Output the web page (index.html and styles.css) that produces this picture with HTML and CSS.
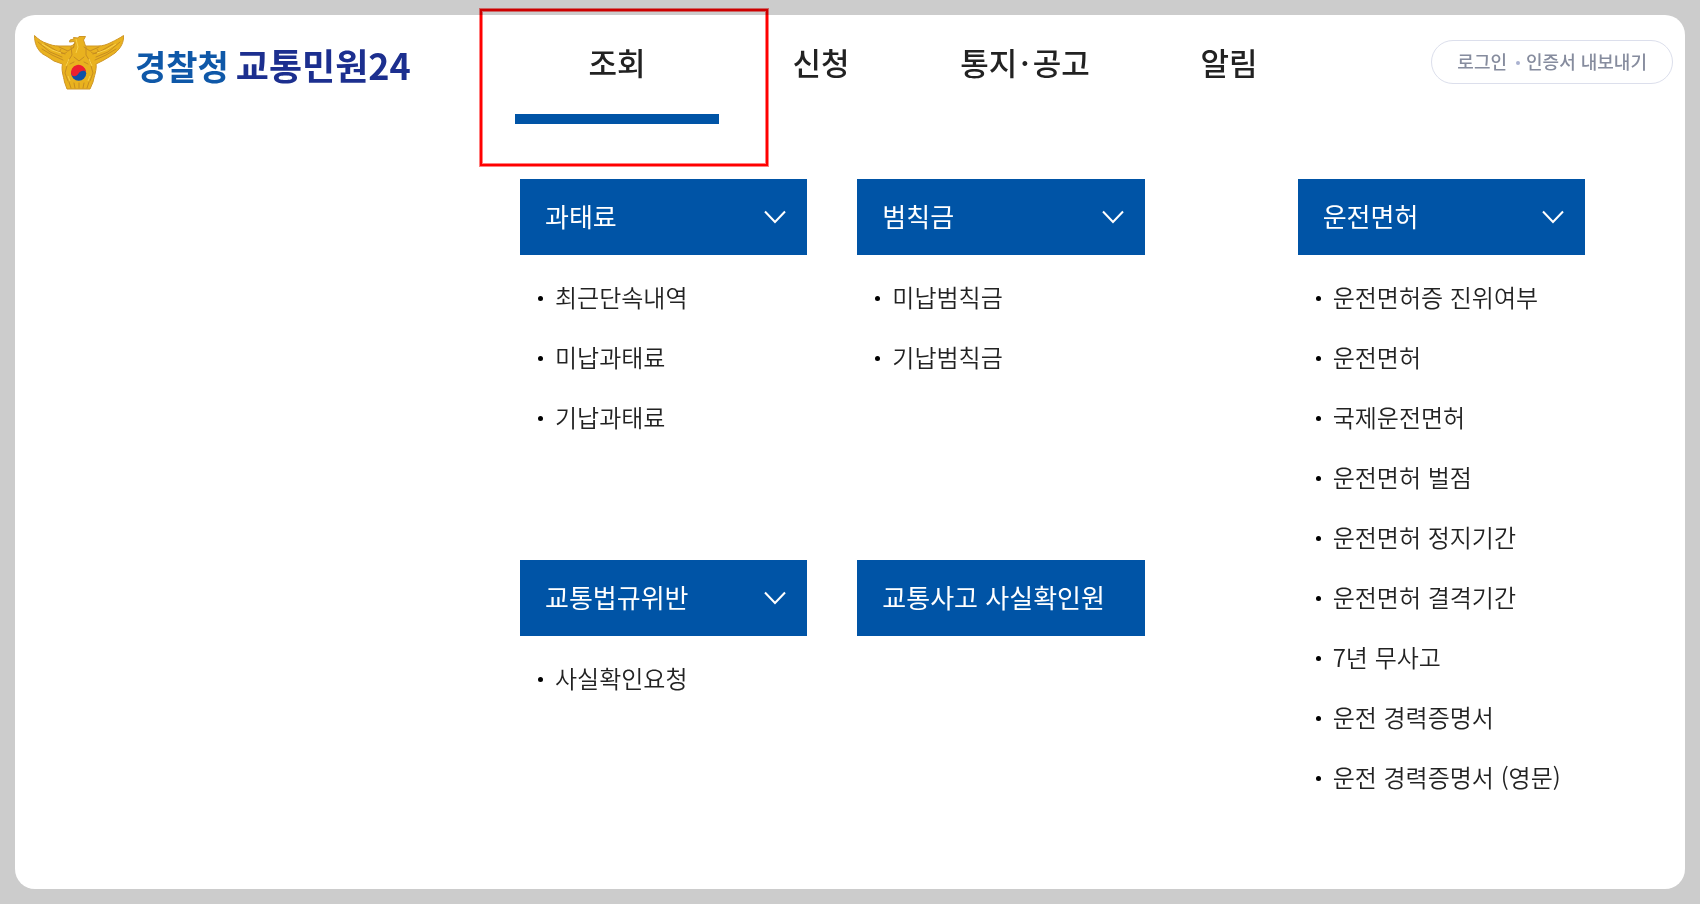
FILE: index.html
```html
<!DOCTYPE html>
<html lang="ko">
<head>
    <meta charset="UTF-8">
    <meta name="viewport" content="width=device-width, initial-scale=1.0">
    <title>경찰청 교통민원24</title>
    <link rel="stylesheet" href="styles.css">
</head>
<body>
    <div class="page">
        <header class="header">
            <a href="#" class="logo">
                <svg class="emblem" viewBox="0 0 90 55" aria-hidden="true">
                    <path fill="#e9b21f" stroke="#cf9626" stroke-width="1" stroke-linejoin="round" d="M.5 .5C4 4 8 7 13 8.500C17 10 20 11 25 11H37C40 10 41 8 40.500 6.500L35.500 7L36 5L40 4L39.500 2.500L44 3L45 1.500H51.500L49.500 5L51.500 11H64C69 11 73 9.500 77 7.500C82 5 86 3 89.500 .5C90 7 87 13 81 18L75 22L69 25.500L62 29C63 34 60 42 59 47L56 54H33L30.500 47C29.500 41 27 35 28.500 29L20 26L14 22L8 18.500C3 14 .5 8 .5 .5Z"/>
                    <g fill="none" stroke="#c68d22" stroke-width="1" stroke-linecap="round">
                        <path d="M4 7L16 17L28 22M8 14L18 20L29 25M11 9L23 16L31 19M86 7L74 17L62 22M82 14L72 20L61 25M79 9L67 16L59 19"/>
                        <path d="M25 12L34 16L40 12M65 12L56 16L50 12M27 14C23 18 31 20 33 17M63 14C67 18 59 20 57 17"/>
                        <path d="M37 12L38 20L33 28M52 12L52 20L57 28M40 22L45 26L50 22M41 8L39 13"/>
                        <path d="M33 31L31 38L34 46M57 31L59 38L56 46M35 47L37 53M40 48L41 53M45 48V53M50 48L49 53M55 47L53 53M36 29L40 27M54 29L50 27"/>
                    </g>
                    <path fill="none" stroke="#f8d14a" stroke-width="1" d="M8 9L18 15L27 18M82 9L72 15L63 18M42 4L44 12L42 18M35 24L32 31M55 24L58 31M36 46L34 41M54 46L56 41"/>
                    <circle cx="44.700" cy="38.300" r="7.500" fill="#0f52a8"/>
                    <path fill="#ee1f2f" d="M37.500 40A7.500 7.500 0 1 1 52 37C50 34.500 46 36 44.700 38.300C43 41.500 39.500 42 37.500 40Z"/>
                </svg>
                <span class="logo-text"><span class="logo-org">경찰청</span><span>교통민원24</span></span>
            </a>
            <nav class="gnb">
                <ul>
                    <li class="active"><a href="#">조회</a><span class="marker"></span></li>
                    <li><a href="#">신청</a></li>
                    <li><a href="#">통지<span class="dot">·</span>공고</a></li>
                    <li><a href="#">알림</a></li>
                </ul>
            </nav>
            <div class="util">
                <a href="#">로그인</a>
                <a href="#">인증서 내보내기</a>
            </div>
        </header>

        <main class="menu">
            <section class="group fine">
                <button type="button"><span>과태료</span>
                    <svg class="arrow" viewBox="0 0 22 14" aria-hidden="true"><path d="M1 1.500L11 12L21 1.500"/></svg>
                </button>
                <ul>
                    <li><a href="#">최근단속내역</a></li>
                    <li><a href="#">미납과태료</a></li>
                    <li><a href="#">기납과태료</a></li>
                </ul>
            </section>
            <section class="group penalty">
                <button type="button"><span>범칙금</span>
                    <svg class="arrow" viewBox="0 0 22 14" aria-hidden="true"><path d="M1 1.500L11 12L21 1.500"/></svg>
                </button>
                <ul>
                    <li><a href="#">미납범칙금</a></li>
                    <li><a href="#">기납범칙금</a></li>
                </ul>
            </section>
            <section class="group license">
                <button type="button"><span>운전면허</span>
                    <svg class="arrow" viewBox="0 0 22 14" aria-hidden="true"><path d="M1 1.500L11 12L21 1.500"/></svg>
                </button>
                <ul>
                    <li><a href="#">운전면허증 진위여부</a></li>
                    <li><a href="#">운전면허</a></li>
                    <li><a href="#">국제운전면허</a></li>
                    <li><a href="#">운전면허 벌점</a></li>
                    <li><a href="#">운전면허 정지기간</a></li>
                    <li><a href="#">운전면허 결격기간</a></li>
                    <li><a href="#">7년 무사고</a></li>
                    <li><a href="#">운전 경력증명서</a></li>
                    <li><a href="#">운전 경력증명서 (영문)</a></li>
                </ul>
            </section>
            <section class="group violation">
                <button type="button"><span>교통법규위반</span>
                    <svg class="arrow" viewBox="0 0 22 14" aria-hidden="true"><path d="M1 1.500L11 12L21 1.500"/></svg>
                </button>
                <ul>
                    <li><a href="#">사실확인요청</a></li>
                </ul>
            </section>
            <section class="group accident">
                <button type="button"><span>교통사고 사실확인원</span></button>
            </section>
        </main>
    </div>
</body>
</html>
```
FILE: styles.css
```css
* {
    box-sizing: border-box;
}
body {
    margin: 0;
    padding: 15px;
    min-height: 100vh;
    display: flex;
    background-color: #ccc;
    color: #222;
    font-family: "Noto Sans CJK KR", sans-serif;
}
ul {
    list-style: none;
    margin: 0;
    padding: 0;
}
a {
    color: inherit;
    text-decoration: none;
}
.page {
    flex: 1;
    background-color: #fff;
    border-radius: 20px;
}

/* header */
.header {
    display: flex;
    align-items: flex-start;
    padding-right: 12px;
}
.logo {
    display: flex;
    align-items: flex-start;
    gap: 11px;
    width: 500px;
    padding: 20px 0 0 19px;
    flex-shrink: 0;
}
.emblem {
    width: 90px;
    height: 55px;
}
.logo-text {
    display: flex;
    align-items: baseline;
    gap: 7px;
    font-size: 36px;
    font-weight: 700;
    line-height: 58px;
    white-space: nowrap;
    color: #1c2f8f;
}
.logo-org {
    font-size: 34px;
    color: #0f58a8;
}
.gnb {
    flex: 0 1 816px;
}
.gnb ul {
    display: grid;
    grid-template-columns: repeat(4, 1fr);
}
.gnb li {
    position: relative;
    height: 109px;
    padding-top: 23px;
    text-align: center;
    font-size: 31px;
    font-weight: 500;
    line-height: 48px;
    white-space: nowrap;
}
.gnb .active {
    border-bottom: 10px solid #0054a6;
}
.dot {
    margin: 0 3px;
}
.marker {
    position: absolute;
    top: -6px;
    bottom: -52px;
    left: -35px;
    right: -49px;
    border: 2px solid #f00;
    box-shadow: 0 0 0 1px rgba(255, 0, 0, 0.5), inset 0 0 0 1px rgba(255, 0, 0, 0.5);
    mix-blend-mode: multiply;
    pointer-events: none;
}
.util {
    display: flex;
    align-items: center;
    height: 44px;
    margin: 25px 0 0 auto;
    padding: 0 25px 2px;
    border: 1px solid #dcdfec;
    border-radius: 22px;
    font-size: 18px;
    font-weight: 500;
    color: #868c9e;
    white-space: nowrap;
}
.util a + a::before {
    content: "";
    display: inline-block;
    width: 4px;
    height: 4px;
    margin: 0 6px 2px 9px;
    border-radius: 50%;
    background-color: #aab2d0;
    vertical-align: middle;
}

/* open menu */
.menu {
    display: grid;
    grid-template-columns: 1fr 50px 1fr 153px 1fr;
    grid-template-rows: 381px auto;
    padding: 55px 100px 50px 505px;
}
.fine {
    grid-area: 1 / 1;
}
.penalty {
    grid-area: 1 / 3;
}
.license {
    grid-area: 1 / 5 / 3 / 6;
}
.violation {
    grid-area: 2 / 1;
}
.accident {
    grid-area: 2 / 3;
}
.group button {
    display: flex;
    align-items: center;
    justify-content: space-between;
    width: 100%;
    height: 76px;
    padding: 0 21px 0 25px;
    border: none;
    background-color: #0054a6;
    color: #fff;
    font-family: inherit;
    font-size: 26px;
    white-space: nowrap;
    cursor: pointer;
}
.group button span,
.group li a {
    padding-bottom: 3px;
}
.arrow {
    width: 22px;
    height: 14px;
    fill: none;
    stroke: #fff;
    stroke-width: 2;
}
.group ul {
    padding: 13px 0 0 18px;
}
.group li {
    display: flex;
    align-items: center;
    gap: 12px;
    height: 60px;
    font-size: 24px;
    font-weight: 350;
    white-space: nowrap;
}
.group li::before {
    content: "";
    width: 5px;
    height: 5px;
    border-radius: 50%;
    background-color: #000;
}
```
